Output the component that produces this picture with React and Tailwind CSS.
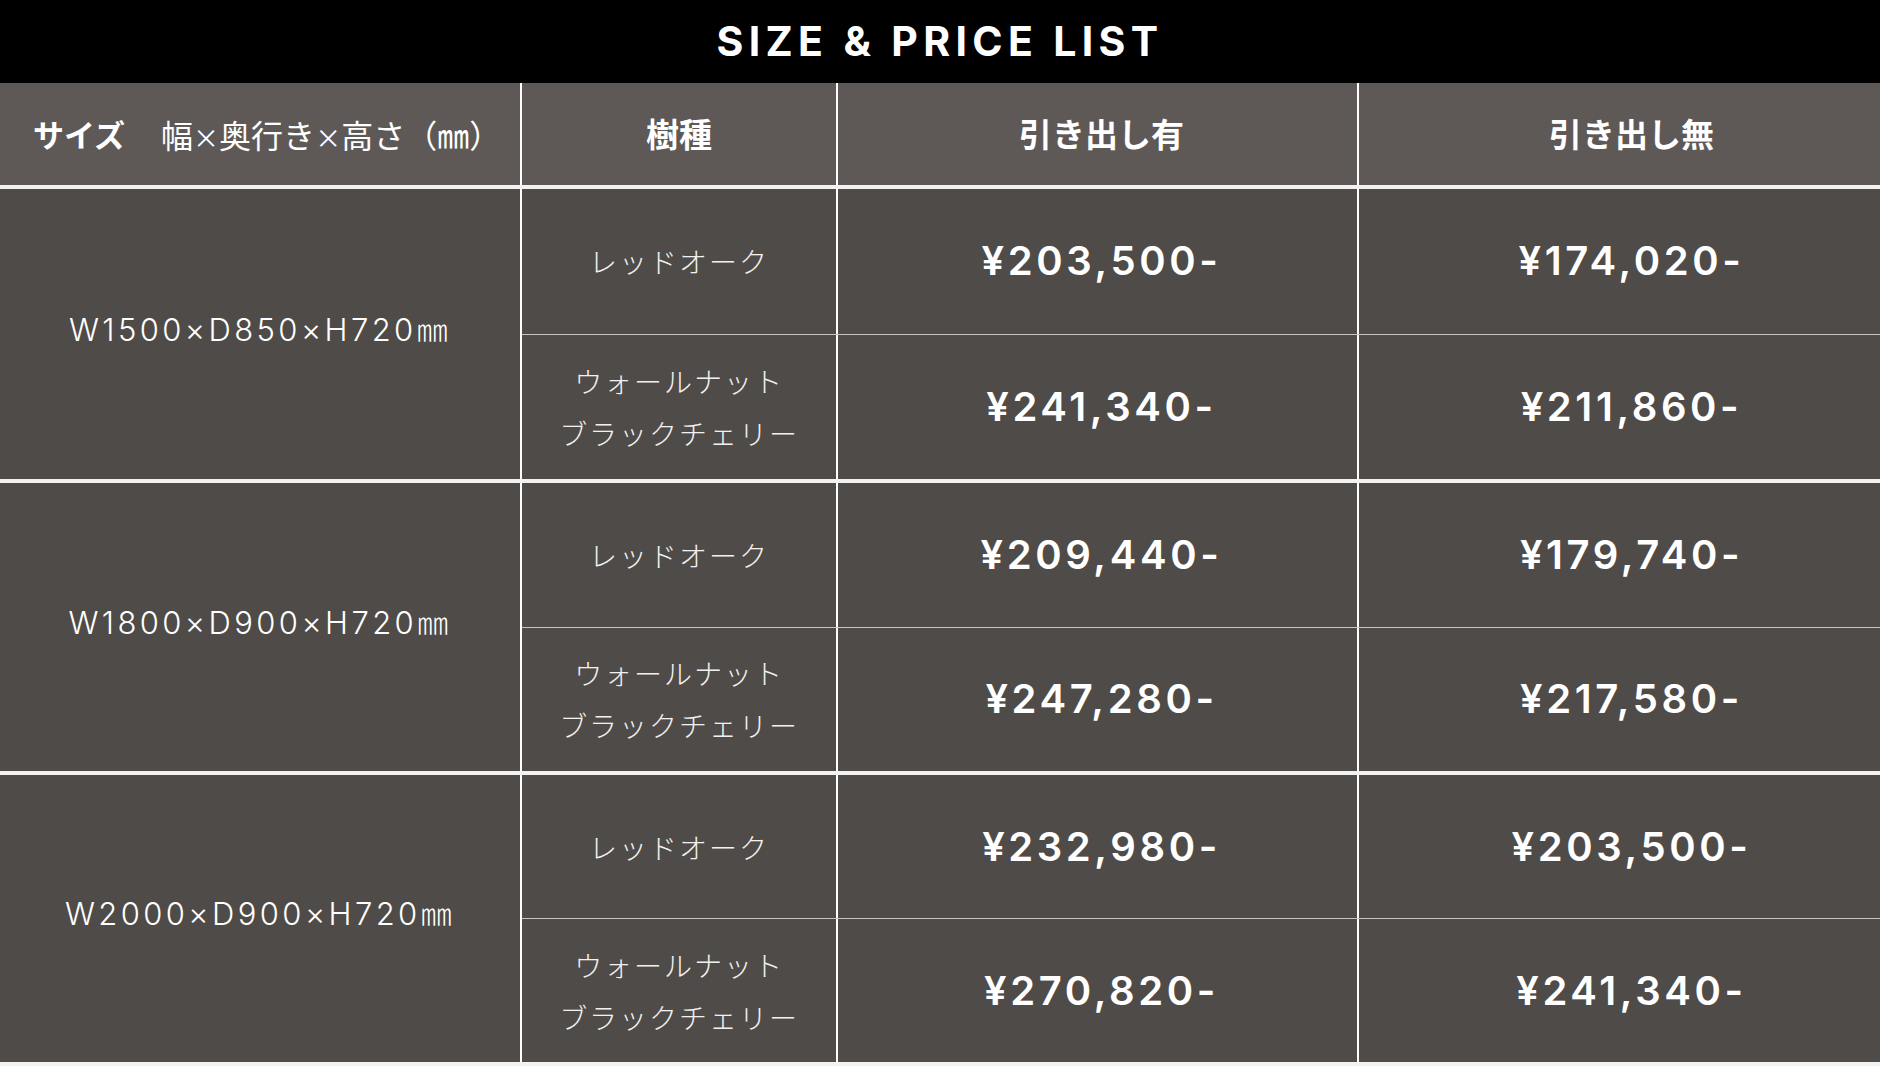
import React from "react";

const rows = [
  {
    size: "W1500×D850×H720㎜",
    h: "h-[294px]",
    items: [
      { wood: ["レッドオーク"], withDrawer: "¥203,500-", noDrawer: "¥174,020-" },
      { wood: ["ウォールナット", "ブラックチェリー"], withDrawer: "¥241,340-", noDrawer: "¥211,860-" },
    ],
  },
  {
    size: "W1800×D900×H720㎜",
    h: "h-[292px]",
    items: [
      { wood: ["レッドオーク"], withDrawer: "¥209,440-", noDrawer: "¥179,740-" },
      { wood: ["ウォールナット", "ブラックチェリー"], withDrawer: "¥247,280-", noDrawer: "¥217,580-" },
    ],
  },
  {
    size: "W2000×D900×H720㎜",
    h: "h-[291px]",
    items: [
      { wood: ["レッドオーク"], withDrawer: "¥232,980-", noDrawer: "¥203,500-" },
      { wood: ["ウォールナット", "ブラックチェリー"], withDrawer: "¥270,820-", noDrawer: "¥241,340-" },
    ],
  },
];

const jp = "font-['Noto_Sans_CJK_JP',sans-serif]";
const latin = "font-['Inter','Noto_Sans_CJK_JP',sans-serif]";

function PriceRow({ item, last }) {
  return (
    <div className={`flex flex-1 ${last ? "" : "border-b border-[#c9c5c1]"}`}>
      <div className={`w-[316px] flex flex-col items-center justify-center border-r-2 border-white text-[28px] font-light leading-[52px] tracking-[0.07em] text-[#f3f1ef] ${jp}`}>
        {item.wood.map((w) => (
          <span key={w}>{w}</span>
        ))}
      </div>
      <div className={`w-[521px] flex items-center justify-center pl-[8px] border-r-2 border-white text-[40px] font-semibold tracking-[0.09em] text-white ${latin}`}>
        {item.withDrawer}
      </div>
      <div className={`flex-1 flex items-center justify-center pl-[24px] text-[40px] font-semibold tracking-[0.09em] text-white ${latin}`}>
        {item.noDrawer}
      </div>
    </div>
  );
}

export default function App() {
  return (
    <div className="w-[1880px] h-[1066px] bg-white flex flex-col overflow-hidden">
      <div className="h-[83px] shrink-0 bg-black flex items-center justify-center">
        <h1 className={`text-[41px] font-bold tracking-[0.13em] text-white ${latin}`}>SIZE &amp; PRICE LIST</h1>
      </div>

      <div className="h-[106px] shrink-0 flex bg-[#5e5956] border-b-4 border-[#f4f2f0] text-white">
        <div className={`w-[522px] flex items-center pl-[33px] border-r-2 border-white ${jp}`}>
          <span className="text-[31px] font-bold">サイズ</span>
          <span className="ml-[36px] text-[32px] font-normal">
            幅<span className="text-[26px]">×</span>奥行き<span className="text-[26px]">×</span>高さ（㎜）
          </span>
        </div>
        <div className={`w-[316px] flex items-center justify-center border-r-2 border-white text-[33px] font-bold ${jp}`}>
          樹種
        </div>
        <div className={`w-[521px] flex items-center justify-center pl-[8px] border-r-2 border-white text-[33px] font-bold ${jp}`}>
          引き出し有
        </div>
        <div className={`flex-1 flex items-center justify-center pl-[24px] text-[33px] font-bold ${jp}`}>
          引き出し無
        </div>
      </div>

      {rows.map((row) => (
        <div key={row.size} className={`${row.h} shrink-0 flex bg-[#4f4b48] border-b-4 border-[#f4f2f0]`}>
          <div className={`w-[522px] flex items-center justify-center pb-[8px] border-r-2 border-white text-[31px] font-light tracking-[0.11em] text-white ${latin}`}>
            {row.size}
          </div>
          <div className="flex-1 flex flex-col">
            {row.items.map((item, i) => (
              <PriceRow key={i} item={item} last={i === row.items.length - 1} />
            ))}
          </div>
        </div>
      ))}
    </div>
  );
}
